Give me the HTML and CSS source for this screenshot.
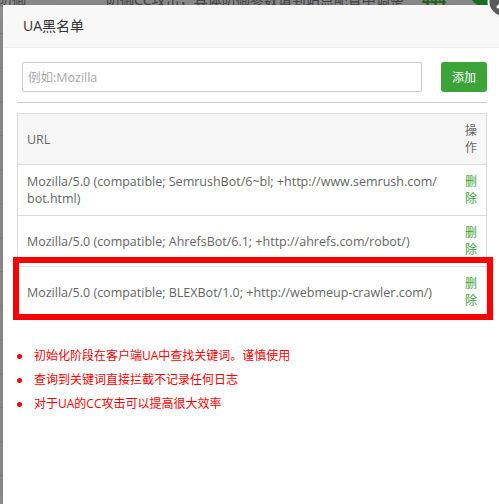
FILE: index.html
```html
<!DOCTYPE html>
<html lang="zh-CN">
<head>
<meta charset="utf-8">
<title>UA黑名单</title>
<link rel="stylesheet" href="styles.css">
</head>
<body>
<div class="backdrop">
  <span class="bg-text bg-left">网站防御</span>
  <span class="bg-text bg-main">防御CC攻击，具体防御参数请到站点配置中调整</span>
  <span class="bg-text bg-num">444</span>
  <span class="bg-dot"></span>
</div>
<div class="layer">
  <div class="layer-title">UA黑名单</div>
  <a class="layer-close" href="#" aria-label="关闭">
    <svg width="32" height="32" viewBox="0 0 32 32">
      <circle cx="16" cy="16" r="14.5" fill="#5a5a5a" stroke="#f2f2f2" stroke-width="2"/>
      <path d="M11 11 L21 21 M21 11 L11 21" stroke="#fff" stroke-width="3" stroke-linecap="round"/>
    </svg>
  </a>
  <div class="layer-content">
    <div class="add-row">
      <input class="ua-input" type="text" placeholder="例如:Mozilla">
      <button class="btn-add" type="button">添加</button>
    </div>
    <div class="divider"></div>
    <table class="ua-table">
      <thead>
        <tr><th class="col-url">URL</th><th class="col-op">操作</th></tr>
      </thead>
      <tbody>
        <tr><td class="col-url">Mozilla/5.0 (compatible; SemrushBot/6~bl; +http://www.semrush.com/<wbr>bot.html)</td><td class="col-op"><a class="del" href="#">删除</a></td></tr>
        <tr><td class="col-url">Mozilla/5.0 (compatible; AhrefsBot/6.1; +http://ahrefs.com/robot/)</td><td class="col-op"><a class="del" href="#">删除</a></td></tr>
        <tr><td class="col-url">Mozilla/5.0 (compatible; BLEXBot/1.0; +http://webmeup-crawler.com/)</td><td class="col-op"><a class="del" href="#">删除</a></td></tr>
      </tbody>
    </table>
    <ul class="tips">
      <li>初始化阶段在客户端UA中查找关键词。谨慎使用</li>
      <li>查询到关键词直接拦截不记录任何日志</li>
      <li>对于UA的CC攻击可以提高很大效率</li>
    </ul>
  </div>
  <div class="highlight"></div>
</div>
</body>
</html>
```
FILE: styles.css
```css
html, body {
  margin: 0;
  padding: 0;
  width: 499px;
  height: 504px;
  overflow: hidden;
}
body {
  background: #9b9b9b;
  font-family: "Open Sans", "Noto Sans CJK SC", sans-serif;
  position: relative;
}
.backdrop {
  position: absolute;
  inset: 0;
  background: repeating-linear-gradient(to bottom, #9b9b9b 0, #9b9b9b 33px, #8d8d8d 33px, #8d8d8d 34px);
}
.bg-text {
  position: absolute;
  top: -9px;
  font-size: 14px;
  line-height: 18px;
  color: #4a4a4a;
  white-space: nowrap;
}
.bg-left { left: -30px; }
.bg-main { left: 106px; }
.bg-num { left: 422px; color: #1f6e1f; font-weight: bold; }
.bg-dot {
  position: absolute;
  left: 470px;
  top: -20px;
  width: 26px;
  height: 26px;
  border-radius: 50%;
  background: #1f7a2a;
}
.layer {
  position: absolute;
  left: 3px;
  top: 5px;
  width: 500px;
  height: 520px;
  background: #fff;
  box-shadow: 1px 1px 50px rgba(0,0,0,.3);
}
.layer-title {
  height: 42px;
  line-height: 42px;
  padding-left: 20px;
  font-size: 14px;
  color: #333;
  background: #f8f8f8;
  border-bottom: 1px solid #eee;
}
.layer-close {
  position: absolute;
  right: -16px;
  top: -19px;
  width: 32px;
  height: 32px;
  display: block;
}
.layer-close svg { display: block; }
.layer-content {
  padding: 14px 0 0 14px;
}
.add-row {
  display: flex;
  align-items: center;
  margin-left: 5px;
}
.ua-input {
  box-sizing: border-box;
  width: 400px;
  height: 30px;
  margin: 0;
  border: 1px solid #ccc;
  border-radius: 2px;
  padding: 0 5px;
  font-family: inherit;
  font-size: 12.5px;
  color: #555;
  outline: none;
}
.ua-input::placeholder { color: #a9a9a9; }
.btn-add {
  margin-left: 19px;
  width: 46px;
  height: 30px;
  border: 0;
  border-radius: 3px;
  background: #3ca339;
  color: #fff;
  font-family: inherit;
  font-size: 12px;
  padding: 0;
}
.divider {
  width: 470px;
  height: 1px;
  background: #ccc;
  margin-top: 10px;
}
.ua-table {
  width: 470px;
  margin-top: 10px;
  border-collapse: collapse;
  border: 1px solid #ddd;
  font-size: 12.5px;
  color: #666;
}
.ua-table th,
.ua-table td {
  border-top: 1px solid #ddd;
  padding: 8px 10px 8px 9px;
  line-height: 17px;
  text-align: left;
  font-weight: normal;
  vertical-align: middle;
}
.ua-table th { background: #f6f6f6; }
.ua-table .col-url { height: 34px; }
.ua-table .col-op {
  width: 12px;
  padding-left: 8px;
  padding-right: 9px;
  font-size: 12px;
  word-break: break-all;
}
.del { color: #3ca339; text-decoration: none; }
.tips {
  list-style: none;
  margin: 26px 0 0;
  padding: 0;
  font-size: 12px;
  color: #f00;
}
.tips li {
  display: flex;
  align-items: center;
  line-height: 24px;
}
.tips li::before {
  content: "";
  width: 5px;
  height: 5px;
  border-radius: 50%;
  background: #f00;
  margin-right: 12px;
}
.highlight {
  position: absolute;
  left: 10px;
  top: 252px;
  width: 480px;
  height: 63px;
  box-sizing: border-box;
  border: 6px solid #f00;
}
```
